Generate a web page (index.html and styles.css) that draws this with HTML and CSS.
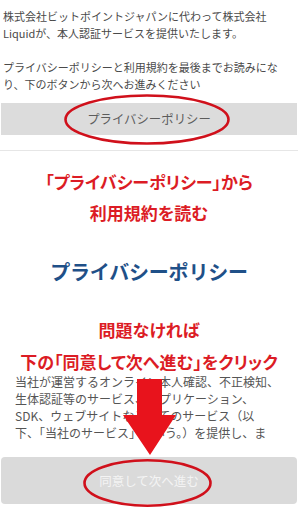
FILE: index.html
```html
<!DOCTYPE html>
<html lang="ja">
<head>
<meta charset="utf-8">
<link rel="stylesheet" href="styles.css">
</head>
<body>
<div class="page">
  <section class="intro">
    <p>株式会社ビットポイントジャパンに代わって株式会社<br>Liquidが、本人認証サービスを提供いたします。</p>
    <p>プライバシーポリシーと利用規約を最後までお読みにな<br>り、下のボタンから次へお進みください</p>
  </section>
  <div class="btn-policy">プライバシーポリシー</div>
  <hr class="sep">
  <section class="doc">
    <h1 class="doc-title">プライバシーポリシー</h1>
    <div class="doc-body">
      <p>当社が運営するオンライン本人確認、不正検知、<br>生体認証等のサービス、アプリケーション、<br>SDK、ウェブサイトなど全てのサービス（以<br>下、「当社のサービス」という。）を提供し、ま</p>
    </div>
    <div class="btn-agree">同意して次へ進む</div>
  </section>

  <div class="notes">
    <p class="note note-read">「プライバシーポリシー」から<br>利用規約を読む</p>
    <p class="note note-ok">問題なければ<br>下の「同意して次へ進む」をクリック</p>
    <svg class="marks" width="298" height="515" viewBox="0 0 298 515">
      <ellipse cx="147" cy="119.5" rx="81.5" ry="24" fill="none" stroke="#d0101b" stroke-width="2.6"/>
      <ellipse cx="147.5" cy="483" rx="63" ry="22.7" fill="none" stroke="#d0101b" stroke-width="2.6"/>
      <polygon points="137,379 162,379 162,415 176,415 150,455 123,415 137,415" fill="#e8131c"/>
    </svg>
  </div>
</div>
</body>
</html>
```
FILE: styles.css
```css
* { box-sizing: border-box; }
html, body { margin: 0; padding: 0; background: #fff; }
body {
  font-family: "Noto Sans CJK JP", "Noto Sans", sans-serif;
  color: #444;
}
.page {
  position: relative;
  width: 298px;
  height: 515px;
  overflow: hidden;
}
.intro {
  padding: 8px 3px 0;
  font-size: 11px;
  line-height: 17px;
  color: #4a4a4a;
}
.intro p { margin: 0 0 17px; }
.intro p:last-child { margin-bottom: 0; }
.btn-policy {
  margin: 10px 1px 0;
  height: 32px;
  background: #dcdcdc;
  color: #5c5c5c;
  font-size: 12.4px;
  line-height: 32px;
  text-align: center;
}
.sep {
  margin: 15px 0 0;
  border: 0;
  border-top: 1px solid #e6e6e6;
  height: 0;
}
.doc { padding: 0 1px; }
.doc-title {
  margin: 107px 0 0;
  font-size: 20px;
  line-height: 28px;
  font-weight: 700;
  color: #1f5088;
  text-align: center;
  letter-spacing: -0.2px;
}
.doc-body {
  margin-top: 87px;
  padding: 0 14px;
  height: 68px;
  font-size: 12px;
  line-height: 17px;
  color: #555;
}
.doc-body p { margin: 0; }
.btn-agree {
  margin-top: 16px;
  height: 47px;
  background: #dadada;
  border-radius: 4px;
  color: #f4f4f4;
  font-size: 12.5px;
  line-height: 47px;
  text-align: center;
}
.notes {
  position: absolute;
  inset: 0;
  pointer-events: none;
}
.note {
  position: absolute;
  left: 0;
  right: 0;
  margin: 0;
  text-align: center;
  color: #dc1c25;
  font-weight: 700;
  font-size: 17px;
  font-feature-settings: "palt";
}
.note-read { top: 166px; line-height: 31px; }
.note-ok { top: 314px; line-height: 32px; }
.marks { position: absolute; left: 0; top: 0; }
```
